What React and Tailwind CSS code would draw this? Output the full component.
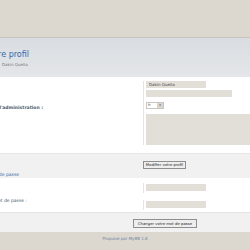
export default function App() {
  const font = { fontFamily: '"DejaVu Sans", Verdana, sans-serif' };
  return (
    <div className="w-[250px] h-[250px] overflow-hidden bg-white flex flex-col" style={font}>
      {/* top header */}
      <div className="h-[38px] shrink-0 bg-[#dcd8d0] border-b border-[#c9c3bd]" />
      {/* title area */}
      <div className="h-[39px] shrink-0 bg-gradient-to-b from-[#d9dde1] to-[#e4e6e9] flex flex-col pt-[12px]">
        <div className="w-[29px] flex justify-end">
          <span className="whitespace-nowrap text-[8px] leading-[10px] text-[#3568ad]">Modifier votre profil</span>
        </div>
        <div className="ml-[2px] mt-[2px] text-[4px] leading-[5px] text-[#777] whitespace-nowrap">Dakin Quelia</div>
      </div>
      {/* profile form */}
      <div className="h-[76px] shrink-0 bg-white flex">
        <div className="w-[143px] shrink-0 flex flex-col">
          <div className="h-[28px]" />
          <div className="w-[43px] flex justify-end">
            <span className="whitespace-nowrap text-[4.5px] leading-[5px] font-bold text-[#4d5b6e]">Message de l'administration :</span>
          </div>
        </div>
        <div className="flex-1 flex flex-col pt-[4px] pb-[7px]">
          <div className="border-l border-[#e4e4e4] pl-[2px] flex flex-col">
            <div className="h-[7px] w-[60px] bg-[#e2dfd9] text-[4px] leading-[7px] text-[#444] pl-[3px] mb-[2px]">Dakin Quelia</div>
            <div className="h-[7px] w-[86px] bg-[#e2dfd9] mb-[5px]" />
            <div className="h-[7px] w-[18px] flex border border-[#c9c5bf] bg-white mb-[5px]">
              <span className="flex-1 text-[3.5px] leading-[5px] pl-[1px] text-[#444]">fr</span>
              <span className="w-[6px] bg-[#d8d5d0] flex items-center justify-center text-[3px] leading-[5px] text-[#333]">▾</span>
            </div>
            <div className="h-[31px] bg-[#e2dfd9]" />
          </div>
        </div>
      </div>
      {/* gray band 1 */}
      <div className="h-[25px] shrink-0 bg-[#f1f1f1] border-t border-[#e6e6e6] flex flex-col">
        <div className="pl-[143px] pt-[7px]">
          <div className="h-[8px] w-[43px] border border-[#8f8f8f] bg-[#eeeeee] text-[3.8px] leading-[6px] text-[#222] flex items-center justify-center whitespace-nowrap">Modifier votre profil</div>
        </div>
        <div className="w-[19px] flex justify-end mt-[3px]">
          <span className="whitespace-nowrap text-[4.5px] leading-[5px] text-[#3568ad]">Changer le mot de passe</span>
        </div>
      </div>
      {/* password form */}
      <div className="h-[34px] shrink-0 bg-white flex">
        <div className="w-[143px] shrink-0 flex flex-col">
          <div className="h-[20px]" />
          <div className="w-[27px] flex justify-end">
            <span className="whitespace-nowrap text-[4.5px] leading-[5px] text-[#4d5b6e]">Confirmer le mot de passe :</span>
          </div>
        </div>
        <div className="flex-1 flex flex-col pt-[5px]">
          <div className="border-l border-[#e4e4e4] pl-[2px] h-[10px] mb-[7px] flex items-start pt-[1px]">
            <div className="h-[7px] w-[60px] bg-[#e2dfd9]" />
          </div>
          <div className="border-l border-[#e4e4e4] pl-[2px] h-[10px] flex items-start pt-[1px]">
            <div className="h-[7px] w-[60px] bg-[#e2dfd9]" />
          </div>
        </div>
      </div>
      {/* gray band 2 */}
      <div className="h-[20px] shrink-0 bg-[#f1f1f1] border-t border-[#e4e4e4] pl-[133px] pt-[6px]">
        <div className="h-[9px] w-[64px] border border-[#8f8f8f] bg-[#eeeeee] text-[3.8px] leading-[7px] text-[#222] flex items-center justify-center whitespace-nowrap">Changer votre mot de passe</div>
      </div>
      {/* footer */}
      <div className="flex-1 bg-[#dcd8d0] flex justify-center pt-[4px]">
        <span className="text-[4px] leading-[5px] text-[#6f83a3] whitespace-nowrap">Propulsé par MyBB 1.8</span>
      </div>
    </div>
  );
}
